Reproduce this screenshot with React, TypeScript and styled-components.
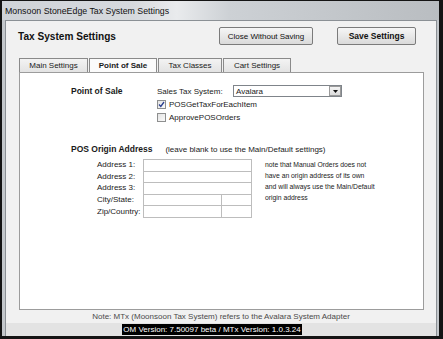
import { Fragment } from 'react';
import styled, { createGlobalStyle } from 'styled-components';

const GlobalStyle = createGlobalStyle`
  html, body {
    margin: 0;
    padding: 0;
    background: #ffffff;
  }
  body {
    font-family: 'Liberation Sans', Arial, sans-serif;
    color: #1a1a1a;
  }
`;

const Window = styled.div`
  box-sizing: border-box;
  width: 443px;
  height: 339px;
  display: flex;
  flex-direction: column;
  border-style: solid;
  border-color: #141414;
  border-width: 1px 4px 3px 2px;
  background: #c6cace;
`;

const TitleBar = styled.div`
  height: 19px;
  display: flex;
  align-items: center;
  padding-left: 3px;
  font-size: 8.8px;
  color: #111;
  background: linear-gradient(
    to right,
    #cfd3d8 0%,
    #d6d9dd 30%,
    #e9ebed 40%,
    #cdd1d5 52%,
    #b9bdc1 100%
  );
`;

const Frame = styled.div`
  flex: 1;
  display: flex;
  padding: 0 2px 0 3px;
  background: #c3c7cb;
`;

const Client = styled.div`
  flex: 1;
  display: flex;
  flex-direction: column;
  border: 1px solid #8b9095;
  border-bottom: none;
  background: #f1f1f1;
`;

const Header = styled.div`
  display: flex;
  align-items: center;
  justify-content: space-between;
  padding: 6px 20px 0 12px;
`;

const Heading = styled.div`
  font-size: 10.1px;
  font-weight: bold;
  color: #111;
`;

const ButtonGroup = styled.div`
  display: flex;
  gap: 24px;
`;

const Button = styled.button<{ $primary?: boolean; $width: number }>`
  box-sizing: border-box;
  width: ${({ $width }) => $width}px;
  height: 18px;
  padding: 0;
  border: 1px solid #7b7b7b;
  border-radius: 2px;
  background: linear-gradient(to bottom, #f6f6f6 0%, #e8e8e8 50%, #dadada 100%);
  font-family: inherit;
  font-size: ${({ $primary }) => ($primary ? '8.5px' : '8px')};
  font-weight: ${({ $primary }) => ($primary ? 'bold' : 'normal')};
  color: #111;
`;

const TabArea = styled.div`
  flex: 1;
  display: flex;
  flex-direction: column;
  margin: 13px 12px 0 13px;
`;

const TabStrip = styled.div`
  display: flex;
  gap: 1px;
  height: 14px;
`;

const Tab = styled.div<{ $active?: boolean; $width: number }>`
  box-sizing: border-box;
  width: ${({ $width }) => $width}px;
  display: flex;
  align-items: center;
  justify-content: center;
  border: 1px solid #8a8a8a;
  border-bottom: none;
  background: ${({ $active }) =>
    $active ? '#fbfbfb' : 'linear-gradient(to bottom, #f3f3f3, #e3e3e3)'};
  font-size: 8px;
  font-weight: ${({ $active }) => ($active ? 'bold' : 'normal')};
  color: #1a1a1a;
`;

const Panel = styled.div`
  flex: 1;
  border: 1px solid #9c9c9c;
  background: #ffffff;
  padding: 12px 0 0 51px;
  font-size: 8px;
`;

const Section = styled.div`
  display: grid;
  grid-template-columns: 86px auto;
`;

const SectionLabel = styled.div`
  font-size: 8.5px;
  font-weight: bold;
  line-height: 12px;
`;

const Stack = styled.div`
  display: flex;
  flex-direction: column;
  gap: 1px;
`;

const FieldRow = styled.div`
  display: flex;
  align-items: center;
  height: 12px;
`;

const FieldLabel = styled.span`
  width: 76px;
`;

const Select = styled.div`
  box-sizing: border-box;
  width: 109px;
  height: 12px;
  display: flex;
  align-items: center;
  justify-content: space-between;
  border: 1px solid #7f848a;
  padding-left: 2px;
  background: #fff;
`;

const SelectButton = styled.span`
  box-sizing: border-box;
  width: 12px;
  height: 10px;
  display: flex;
  align-items: center;
  justify-content: center;
  border: 1px solid #9a9a9a;
  background: linear-gradient(to bottom, #f4f4f4, #dcdcdc);
`;

const CheckRow = styled.label`
  display: flex;
  align-items: center;
  gap: 3px;
  height: 12px;
`;

const Box = styled.span`
  box-sizing: border-box;
  width: 9px;
  height: 9px;
  display: flex;
  align-items: center;
  justify-content: center;
  border: 1px solid #8e8f8f;
  background: linear-gradient(to bottom right, #e4e4e4, #fafafa);
`;

const OriginHeader = styled.div`
  display: flex;
  align-items: center;
  gap: 13px;
  margin-top: 21px;
  height: 10px;
`;

const OriginBody = styled.div`
  display: flex;
  gap: 13px;
  margin: 5px 0 0 26px;
`;

const AddressGrid = styled.div`
  display: grid;
  grid-template-columns: 47px 78px 30px;
  grid-auto-rows: 11.6px;
`;

const AddressLabel = styled.div`
  display: flex;
  align-items: center;
`;

const Input = styled.div<{ $span?: boolean }>`
  grid-column: ${({ $span }) => ($span ? 'span 2' : 'auto')};
  box-sizing: border-box;
  height: 12.6px;
  border: 1px solid #bdbdbd;
  margin: 0 0 -1px -1px;
  background: #fff;
`;

const SideNote = styled.div`
  width: 118px;
  font-size: 6.8px;
  line-height: 11px;
  color: #222;
`;

const FooterNote = styled.div`
  height: 13px;
  display: flex;
  align-items: center;
  justify-content: center;
  font-size: 8px;
  color: #4a4a4a;
`;

const StatusBar = styled.div`
  height: 13px;
  display: flex;
  align-items: center;
  justify-content: center;
  padding-right: 18px;
  background: #e3e3e3;
`;

const Version = styled.span`
  background: #000;
  color: #fff;
  font-size: 8px;
  line-height: 11px;
  padding: 0 1px;
`;

function Checkbox({ label, checked }: { label: string; checked?: boolean }) {
  return (
    <CheckRow>
      <Box>
        {checked && (
          <svg width="7" height="7" viewBox="0 0 7 7">
            <path d="M1 3.5 L2.8 5.5 L6 1" fill="none" stroke="#2a3f8f" strokeWidth="1.3" />
          </svg>
        )}
      </Box>
      {label}
    </CheckRow>
  );
}

const tabs = [
  { text: 'Main Settings', width: 69 },
  { text: 'Point of Sale', width: 68, active: true },
  { text: 'Tax Classes', width: 64 },
  { text: 'Cart Settings', width: 68 },
];

const addressRows = ['Address 1:', 'Address 2:', 'Address 3:', 'City/State:', 'Zip/Country:'];

export default function App() {
  return (
    <>
      <GlobalStyle />
      <Window>
        <TitleBar>Monsoon StoneEdge Tax System Settings</TitleBar>
        <Frame>
          <Client>
            <Header>
              <Heading>Tax System Settings</Heading>
              <ButtonGroup>
                <Button $width={94}>Close Without Saving</Button>
                <Button $width={79} $primary>
                  Save Settings
                </Button>
              </ButtonGroup>
            </Header>
            <TabArea>
              <TabStrip>
                {tabs.map((tab) => (
                  <Tab key={tab.text} $width={tab.width} $active={tab.active}>
                    {tab.text}
                  </Tab>
                ))}
              </TabStrip>
              <Panel>
                <Section>
                  <SectionLabel>Point of Sale</SectionLabel>
                  <Stack>
                    <FieldRow>
                      <FieldLabel>Sales Tax System:</FieldLabel>
                      <Select>
                        Avalara
                        <SelectButton>
                          <svg width="5" height="3" viewBox="0 0 5 3">
                            <path d="M0 0 H5 L2.5 3 Z" fill="#111" />
                          </svg>
                        </SelectButton>
                      </Select>
                    </FieldRow>
                    <Checkbox label="POSGetTaxForEachItem" checked />
                    <Checkbox label="ApprovePOSOrders" />
                  </Stack>
                </Section>
                <OriginHeader>
                  <SectionLabel>POS Origin Address</SectionLabel>
                  <span>(leave blank to use the Main/Default settings)</span>
                </OriginHeader>
                <OriginBody>
                  <AddressGrid>
                    {addressRows.map((label, i) => (
                      <Fragment key={label}>
                        <AddressLabel>{label}</AddressLabel>
                        {i < 3 ? (
                          <Input $span />
                        ) : (
                          <>
                            <Input />
                            <Input />
                          </>
                        )}
                      </Fragment>
                    ))}
                  </AddressGrid>
                  <SideNote>
                    note that Manual Orders does not
                    <br />
                    have an origin address of its own
                    <br />
                    and will always use the Main/Default
                    <br />
                    origin address
                  </SideNote>
                </OriginBody>
              </Panel>
            </TabArea>
            <FooterNote>Note: MTx (Moonsoon Tax System) refers to the Avalara System Adapter</FooterNote>
            <StatusBar>
              <Version>OM Version: 7.50097 beta / MTx Version: 1.0.3.24</Version>
            </StatusBar>
          </Client>
        </Frame>
      </Window>
    </>
  );
}
